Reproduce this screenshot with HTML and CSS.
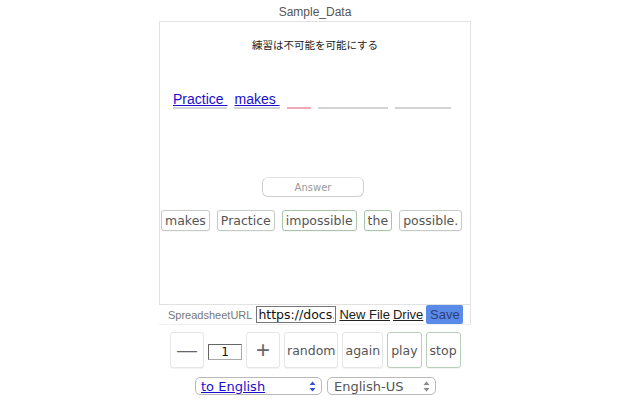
FILE: index.html
```html
<!DOCTYPE html>
<html lang="ja">
<head>
<meta charset="utf-8">
<title>Sample_Data</title>
<link rel="stylesheet" href="styles.css">
</head>
<body>
<div class="app">
  <div class="title">Sample_Data</div>
  <div class="panel">
    <div class="prompt">練習は不可能を可能にする</div>
    <div class="blanks">
      <span class="blank"><a href="#" class="filled">Practice </a></span>
      <span class="blank"><a href="#" class="filled">makes </a></span>
      <span class="blank current w24"></span>
      <span class="blank w70"></span>
      <span class="blank w56"></span>
    </div>
    <div class="answer-wrap"><input class="answer" type="text" placeholder="Answer"></div>
    <div class="words">
      <button class="word">makes</button>
      <button class="word">Practice</button>
      <button class="word green">impossible</button>
      <button class="word green">the</button>
      <button class="word">possible.</button>
    </div>
  </div>
  <div class="bar">
    <span class="label">SpreadsheetURL</span>
    <input class="url" type="text" value="https://docs.google.com/spreadsheets">
    <a href="#" class="plain">New File</a>
    <a href="#" class="plain">Drive</a>
    <button class="save">Save</button>
  </div>
  <div class="controls">
    <button class="ctl sym">—</button>
    <input class="count" type="text" value="1">
    <button class="ctl sym plus">+</button>
    <button class="ctl">random</button>
    <button class="ctl">again</button>
    <button class="ctl green">play</button>
    <button class="ctl green">stop</button>
  </div>
  <div class="selects">
    <div class="select to">
      <span class="sel-text link">to English</span>
      <svg class="arrows" width="7" height="11" viewBox="0 0 7 11"><path d="M3.5 0.5 L6.5 4 L0.5 4 Z M3.5 10.5 L6.5 7 L0.5 7 Z" fill="#2f4ee0"/></svg>
    </div>
    <div class="select lang">
      <span class="sel-text">English-US</span>
      <svg class="arrows" width="7" height="11" viewBox="0 0 7 11"><path d="M3.5 0.5 L6.5 4 L0.5 4 Z M3.5 10.5 L6.5 7 L0.5 7 Z" fill="#888"/></svg>
    </div>
  </div>
</div>
</body>
</html>
```
FILE: styles.css
```css
* { box-sizing: border-box; }
html, body { margin: 0; padding: 0; background: #fff; }
body { width: 640px; height: 400px; overflow: hidden; font-family: "Liberation Sans", Arial, sans-serif; }

.app { width: 312px; margin-left: 159px; }

.title {
  height: 21px;
  padding-top: 5px;
  text-align: center;
  font-size: 12px;
  line-height: 15px;
  color: #555;
}

.panel {
  height: 284px;
  border: 1px solid #e2e2e2;
  display: flex;
  flex-direction: column;
}

.prompt {
  margin-top: 16px;
  text-align: center;
  font-family: "Noto Sans CJK JP", sans-serif;
  font-size: 10.5px;
  line-height: 14px;
  color: #222;
}

.blanks {
  margin-top: 39px;
  padding-left: 13px;
  display: flex;
  gap: 7px;
  align-items: flex-end;
  height: 18px;
}
.blank {
  display: block;
  height: 18px;
  border-bottom: 2px solid #d4d4d4;
  font-size: 14px;
  line-height: 17px;
  white-space: pre;
}
.blank.current { border-bottom-color: #f2a7b8; }
.w24 { width: 24px; }
.w70 { width: 70px; }
.w56 { width: 56px; }
.filled { color: #1a0dcc; text-decoration: underline; }

.answer-wrap { margin-top: 68px; display: flex; justify-content: center; padding-right: 4px; }
.answer {
  width: 102px;
  height: 20px;
  border: 1px solid #cfcfcf;
  border-top-color: #e4e4e4;
  border-radius: 6px;
  text-align: center;
  font-family: "DejaVu Sans", sans-serif;
  font-size: 10px;
  padding: 0;
  outline: none;
}
.answer::placeholder { color: #999; }

.words {
  margin-top: 13px;
  padding-left: 1px;
  display: flex;
  gap: 7px;
}
.word {
  height: 21px;
  padding: 0 3px;
  border: 1px solid #c4cbc4;
  border-radius: 3px;
  background: #fff;
  font-family: "DejaVu Sans", sans-serif;
  font-size: 12.5px;
  color: #555;
  box-shadow: 0 1px 1px rgba(0,0,0,0.04);
}
.word.green { border-color: #a9c4a9; }

.bar {
  height: 20px;
  display: flex;
  align-items: center;
  padding-left: 9px;
  border-right: 1px solid #e2e2e2;
  border-bottom: 1px solid #f0f0f0;
}
.label { font-size: 11px; color: #777; margin-right: 4px; }
.url {
  width: 80px;
  height: 17px;
  border: 1px solid #777;
  padding: 0 1px;
  font-family: "DejaVu Sans", sans-serif;
  font-size: 12.5px;
  color: #111;
  margin-right: 3px;
  outline: none;
}
.plain {
  color: #222;
  font-size: 13px;
  text-decoration: underline;
  margin-right: 3px;
}
.save {
  height: 19px;
  width: 37px;
  padding: 0;
  margin-top: -1px;
  border: none;
  border-radius: 2px;
  background: #5a8be9;
  color: #2d3f78;
  font-family: "Liberation Sans", Arial, sans-serif;
  font-size: 13px;
}

.controls {
  margin-top: 7px;
  padding-left: 11px;
  display: flex;
  align-items: center;
  gap: 4px;
}
.ctl {
  height: 36px;
  padding: 0 2px;
  border: 1px solid #e6e6e6;
  border-radius: 3px;
  background: #fff;
  font-family: "DejaVu Sans", sans-serif;
  font-size: 12.5px;
  color: #555;
  box-shadow: 0 1px 1px rgba(0,0,0,0.05);
}
.ctl.green { border-color: #b7d0b7; padding: 0 3px; }
.sym { width: 34px; font-size: 20px; color: #666; font-family: "Liberation Sans", Arial, sans-serif; }
.plus { font-size: 24px; font-weight: 300; }
.count {
  width: 34px;
  height: 16px;
  border: 1px solid #666;
  border-right-color: #aaa;
  border-bottom-color: #aaa;
  text-align: center;
  font-family: "DejaVu Sans", sans-serif;
  font-size: 12px;
  padding: 0;
  color: #111;
  margin: 3px 0 0;
}

.selects {
  margin-top: 9px;
  padding-left: 36px;
  display: flex;
  gap: 5px;
}
.select {
  height: 18px;
  border: 1px solid #b9b9b9;
  border-radius: 5px;
  display: flex;
  align-items: center;
  justify-content: space-between;
  padding: 0 5px 0 5px;
  font-family: "DejaVu Sans", sans-serif;
  font-size: 13px;
  color: #555;
}
.select.to { width: 127px; }
.select.lang { width: 109px; padding-left: 6px; }
.sel-text.link { color: #1a0dcc; text-decoration: underline; }
.arrows { flex: none; }
```
